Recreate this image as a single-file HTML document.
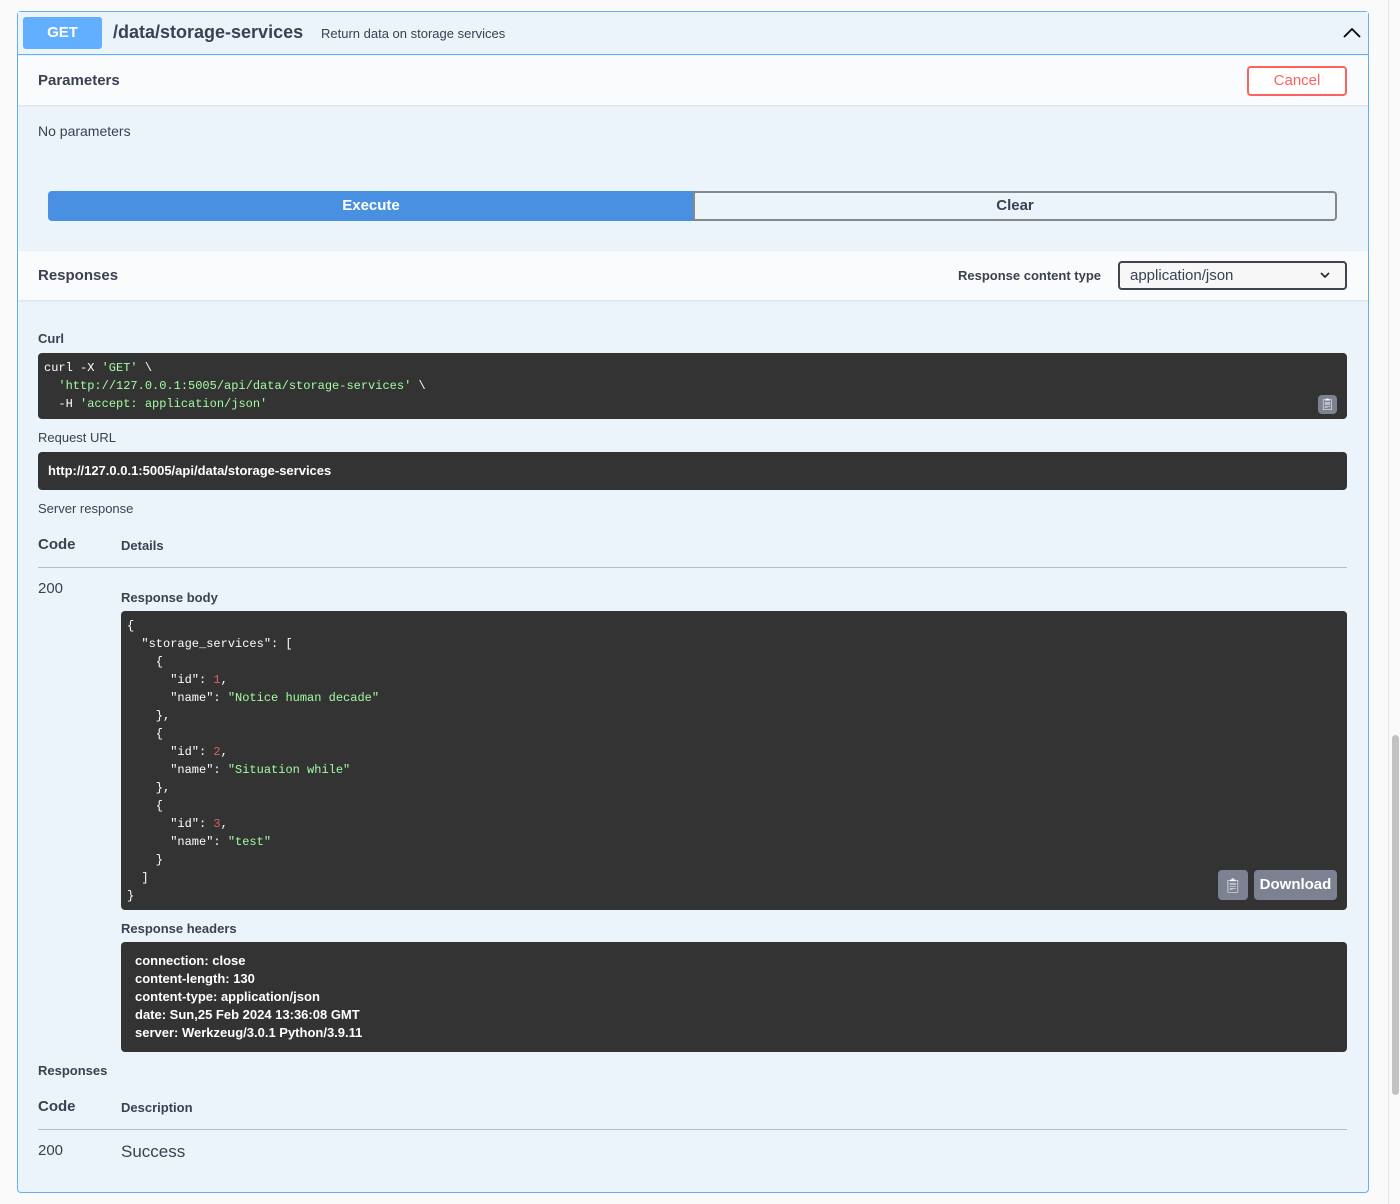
<!DOCTYPE html>
<html><head><meta charset="utf-8"><style>
*{margin:0;padding:0;box-sizing:border-box}
body{width:1400px;height:1204px;background:#fafafa;font-family:"Liberation Sans",sans-serif;color:#3b4151;position:relative;overflow:hidden}
.a{position:absolute;white-space:pre}
.frame{position:absolute;left:17px;top:11px;width:1352px;height:1182px;border:1px solid #61affe;border-radius:4px;background:#ebf3fb}
.dark{position:absolute;background:#333;border-radius:4px}
.mono{font-family:"Liberation Mono",monospace;font-size:12px;color:#fff;line-height:18px}
.g{color:#a2fca2}.r{color:#d36363}
.b{font-weight:bold}
</style></head><body>
<div class="frame"></div>
<div class="a" style="left:18px;top:12px;width:1350px;height:43px;border-bottom:1px solid #61affe;background:#ebf3fb"></div>
<div class="a b" style="left:23px;top:17px;width:79px;height:32px;background:#61affe;border-radius:3px;color:#fff;font-size:15px;text-align:center;line-height:32px">GET</div>
<div class="a" style="left:113px;top:22px;font-size:18px;font-weight:bold;color:#3b4151">/data/storage-services</div>
<div class="a" style="left:321px;top:26px;font-size:13px;color:#3b4151">Return data on storage services</div>
<svg class="a" style="left:1342px;top:26px" width="20" height="14"><path d="M2 11 L10 3 L18 11" fill="none" stroke="#000" stroke-width="1.8"/></svg>
<div class="a" style="left:18px;top:56px;width:1350px;height:49px;background:#fafbfd;box-shadow:0 1px 2px rgba(0,0,0,.08)"></div>
<div class="a b" style="left:38px;top:72px;font-size:15px">Parameters</div>
<div class="a" style="left:1247px;top:66px;width:100px;height:30px;border:2px solid #ff6060;border-radius:4px;color:#ff6060;font-size:15px;text-align:center;line-height:26px;background:#fff">Cancel</div>
<div class="a" style="left:38px;top:123px;font-size:14px">No parameters</div>
<div class="a b" style="left:48px;top:191px;width:646px;height:30px;background:#4990e2;border-radius:4px 0 0 4px;color:#fff;font-size:15px;text-align:center;line-height:30px">Execute</div>
<div class="a b" style="left:693px;top:191px;width:644px;height:30px;border:2px solid #888;border-radius:0 4px 4px 0;color:#3b4151;font-size:15px;text-align:center;line-height:26px">Clear</div>
<div class="a" style="left:18px;top:251px;width:1350px;height:49px;background:#fafbfd;box-shadow:0 1px 2px rgba(0,0,0,.08)"></div>
<div class="a b" style="left:38px;top:267px;font-size:15px">Responses</div>
<div class="a b" style="left:958px;top:268px;font-size:13px">Response content type</div>
<div class="a" style="left:1118px;top:261px;width:229px;height:29px;border:2px solid #41444e;border-radius:4px;background:#f7f7f7;font-size:15px;padding-left:10px;line-height:25px">application/json</div>
<svg class="a" style="left:1319px;top:271px" width="12" height="9"><path d="M2 2 L6 6 L10 2" fill="none" stroke="#222" stroke-width="1.6"/></svg>
<div class="a b" style="left:38px;top:331px;font-size:13px">Curl</div>
<div class="dark" style="left:38px;top:353px;width:1309px;height:66px"></div>
<div class="a mono" style="left:44px;top:359px">curl -X <span class="g">'GET'</span> \
  <span class="g">'http://127.0.0.1:5005/api/data/storage-services'</span> \
  -H <span class="g">'accept: application/json'</span></div>
<div class="a" style="left:1318px;top:395px;width:19px;height:19px;background:#7d8293;border-radius:4px;color:#fff;font-size:12px;text-align:center;line-height:19px">&#x1F4CB;&#xFE0E;</div>
<div class="a" style="left:38px;top:430px;font-size:13px">Request URL</div>
<div class="dark" style="left:38px;top:452px;width:1309px;height:38px"></div>
<div class="a b" style="left:48px;top:463px;font-size:13px;color:#fff">http://127.0.0.1:5005/api/data/storage-services</div>
<div class="a" style="left:38px;top:501px;font-size:13px">Server response</div>
<div class="a b" style="left:38px;top:536px;font-size:15px">Code</div>
<div class="a b" style="left:121px;top:538px;font-size:13px">Details</div>
<div class="a" style="left:38px;top:567px;width:1309px;height:1px;background:#b6bcc8"></div>
<div class="a" style="left:38px;top:580px;font-size:15px">200</div>
<div class="a b" style="left:121px;top:590px;font-size:13px">Response body</div>
<div class="dark" style="left:121px;top:611px;width:1226px;height:299px"></div>
<div class="a mono" style="left:127px;top:617px">{
  "storage_services": [
    {
      "id": <span class="r">1</span>,
      "name": <span class="g">"Notice human decade"</span>
    },
    {
      "id": <span class="r">2</span>,
      "name": <span class="g">"Situation while"</span>
    },
    {
      "id": <span class="r">3</span>,
      "name": <span class="g">"test"</span>
    }
  ]
}</div>
<div class="a" style="left:1218px;top:870px;width:30px;height:30px;background:#7d8293;border-radius:4px;color:#fff;font-size:14px;text-align:center;line-height:30px">&#x1F4CB;&#xFE0E;</div>
<div class="a b" style="left:1254px;top:870px;width:83px;height:30px;background:#7d8293;border-radius:4px;color:#fff;font-size:15px;text-align:center;line-height:30px">Download</div>
<div class="a b" style="left:121px;top:921px;font-size:13px">Response headers</div>
<div class="dark" style="left:121px;top:942px;width:1226px;height:110px"></div>
<div class="a b" style="left:135px;top:952px;font-size:13px;color:#fff;line-height:18px">connection: close
content-length: 130
content-type: application/json
date: Sun,25 Feb 2024 13:36:08 GMT
server: Werkzeug/3.0.1 Python/3.9.11</div>
<div class="a b" style="left:38px;top:1063px;font-size:13px">Responses</div>
<div class="a b" style="left:38px;top:1098px;font-size:15px">Code</div>
<div class="a b" style="left:121px;top:1100px;font-size:13px">Description</div>
<div class="a" style="left:38px;top:1129px;width:1309px;height:1px;background:#b6bcc8"></div>
<div class="a" style="left:38px;top:1142px;font-size:15px">200</div>
<div class="a" style="left:121px;top:1142px;font-size:17px">Success</div>
<div class="a" style="left:1388px;top:0;width:12px;height:1204px;background:#fafafa;border-left:1px solid #e8e8e8"></div>
<div class="a" style="left:1392px;top:735px;width:7px;height:360px;background:#c2c2c2;border-radius:4px"></div>
</body></html>
